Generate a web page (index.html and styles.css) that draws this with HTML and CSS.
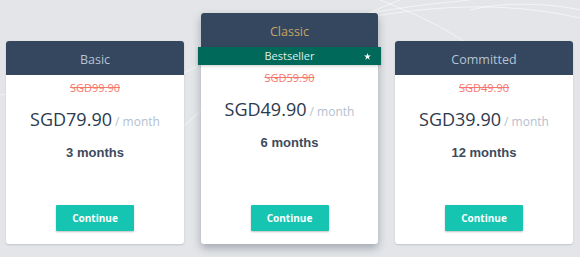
FILE: index.html
```html
<!DOCTYPE html>
<html lang="en">
<head>
  <meta charset="UTF-8">
  <meta name="viewport" content="width=device-width, initial-scale=1.0">
  <title>Plans</title>
  <link rel="stylesheet" href="styles.css">
</head>
<body>
  <main class="plans">
    <section class="plan">
      <div class="plan-head">Basic</div>
      <div class="plan-body">
        <p class="old-price">SGD99.90</p>
        <p class="price">SGD79.90<span class="per"> / month</span></p>
        <p class="term">3 months</p>
        <button class="continue">Continue</button>
      </div>
    </section>
    <section class="plan featured">
      <div class="plan-head">Classic</div>
      <div class="ribbon">
        Bestseller
        <svg class="star" viewBox="0 0 10 10" width="7" height="7"><polygon points="5,0 6.2,3.6 10,3.6 6.9,5.8 8.1,9.5 5,7.2 1.9,9.5 3.1,5.8 0,3.6 3.8,3.6" fill="#fff"/></svg>
      </div>
      <div class="plan-body">
        <p class="old-price">SGD59.90</p>
        <p class="price">SGD49.90<span class="per"> / month</span></p>
        <p class="term">6 months</p>
        <button class="continue">Continue</button>
      </div>
    </section>
    <section class="plan">
      <div class="plan-head">Committed</div>
      <div class="plan-body">
        <p class="old-price">SGD49.90</p>
        <p class="price">SGD39.90<span class="per"> / month</span></p>
        <p class="term">12 months</p>
        <button class="continue">Continue</button>
      </div>
    </section>
  </main>
</body>
</html>
```

FILE: styles.css
```css
* {
  box-sizing: border-box;
}
body {
  margin: 0;
  height: 257px;
  overflow: hidden;
  font-family: "Open Sans", Arial, sans-serif;
  background-color: #e3e5e8;
  background-image: url("data:image/svg+xml;utf8,<svg xmlns='http://www.w3.org/2000/svg' width='580' height='257'><g fill='none' stroke='white' stroke-opacity='0.55' stroke-width='1'><path d='M150 90 C260 30 360 10 470 0'/><path d='M330 25 C420 5 500 0 580 18'/><path d='M380 0 C430 20 450 30 490 60'/><path d='M180 130 C230 80 300 40 400 0'/><path d='M0 95 C40 90 60 85 90 80'/><path d='M470 10 C510 0 560 5 580 10'/></g></svg>");
}
.plans {
  display: flex;
  align-items: flex-end;
  gap: 17px;
  padding: 13px 0 0 6px;
}
.plan {
  width: 178px;
  height: 203px;
  display: flex;
  flex-direction: column;
  background: #fff;
  border-radius: 3px;
  box-shadow: 0 1px 2px rgba(40, 50, 70, 0.18);
}
.plan.featured {
  width: 177px;
  height: 231px;
  box-shadow: 0 4px 8px rgba(40, 50, 70, 0.35);
}
.plan-head {
  height: 34px;
  padding-top: 10px;
  background: #34475e;
  border-radius: 3px 3px 0 0;
  color: #b6c3d3;
  font-size: 12.5px;
  text-align: center;
}
.featured .plan-head {
  color: #c7a566;
}
.ribbon {
  position: relative;
  height: 18px;
  margin: 0 -3px;
  padding-top: 1px;
  background: #00695a;
  color: #dcefe9;
  font-size: 11px;
  text-align: center;
  box-shadow: 0 1px 3px rgba(0, 0, 0, 0.2);
}
.star {
  position: absolute;
  right: 10px;
  top: 6px;
}
.plan-body {
  flex: 1;
  display: flex;
  flex-direction: column;
  align-items: center;
  padding: 6px 0 13px;
}
.plan-body p {
  margin: 0;
}
.old-price {
  font-size: 11px;
  line-height: 14px;
  color: #f7776c;
  text-decoration: line-through;
}
.price {
  margin-top: 12px !important;
  font-size: 18px;
  line-height: 24px;
  color: #2c3a4e;
}
.per {
  font-size: 12px;
  color: #b4c0cf;
}
.term {
  margin-top: 11px !important;
  font-family: "Liberation Sans", Arial, sans-serif;
  font-weight: bold;
  font-size: 13px;
  line-height: 16px;
  color: #3d4a5d;
}
.continue {
  margin-top: auto;
  width: 78px;
  height: 26px;
  border: none;
  border-radius: 1px;
  background: #16c5b1;
  color: #fff;
  font-family: "Open Sans", Arial, sans-serif;
  font-weight: bold;
  font-size: 10px;
  box-shadow: 0 1px 2px rgba(0, 0, 0, 0.25);
  cursor: pointer;
}
```
